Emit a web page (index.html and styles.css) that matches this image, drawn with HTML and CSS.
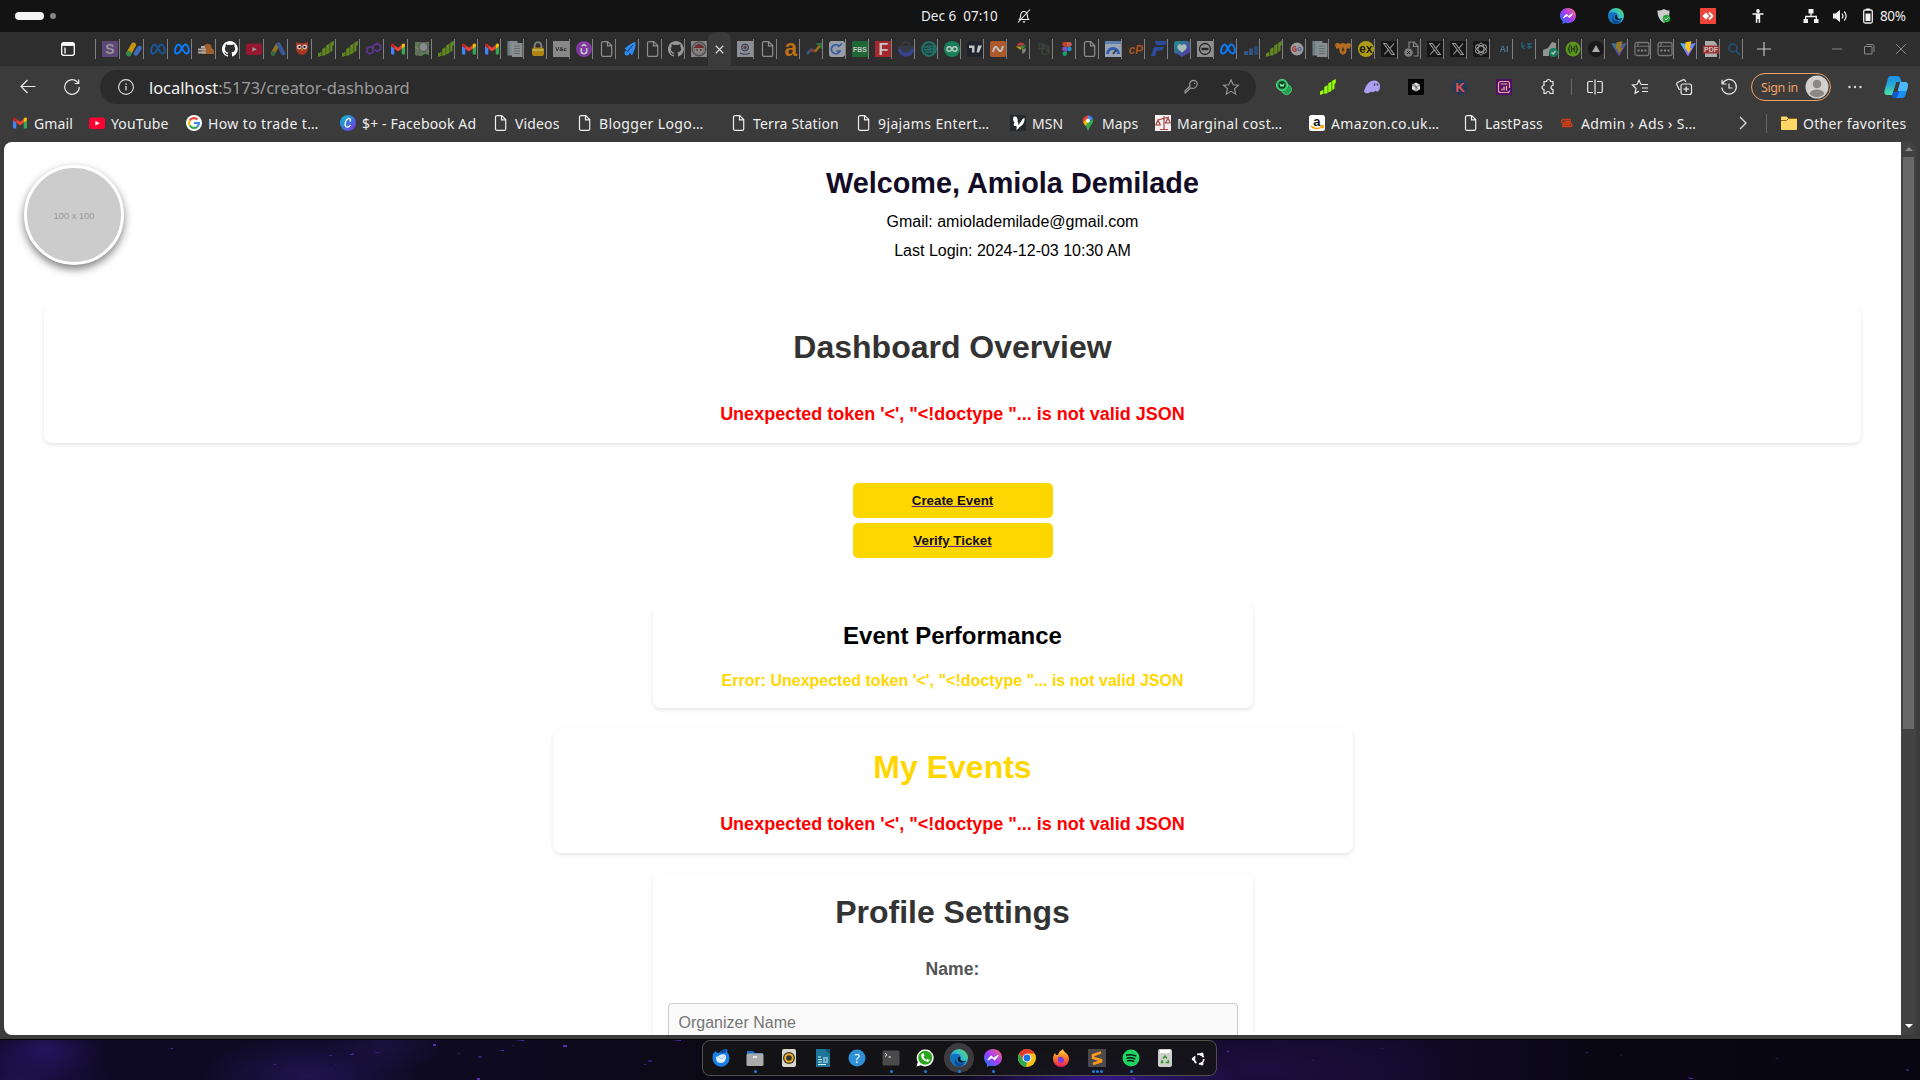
FILE: index.html
```html
<!DOCTYPE html>
<html lang="en">
<head>
<meta charset="utf-8">
<title>Creator Dashboard</title>
<link rel="stylesheet" href="styles.css">
</head>
<body>
<svg class="defs" aria-hidden="true">
<defs>
<linearGradient id="gm" x1="0" y1="1" x2="1" y2="0"><stop offset="0" stop-color="#0a7cff"/><stop offset=".5" stop-color="#a33bfa"/><stop offset="1" stop-color="#ff6968"/></linearGradient>
<linearGradient id="ge" x1="0" y1="1" x2="1" y2="0"><stop offset="0" stop-color="#0c59a4"/><stop offset=".5" stop-color="#2bb4e4"/><stop offset="1" stop-color="#5fe05a"/></linearGradient>
<linearGradient id="gc" x1="0" y1="0" x2="1" y2="1"><stop offset="0" stop-color="#00c4cc"/><stop offset="1" stop-color="#7d2ae8"/></linearGradient>
<linearGradient id="gv" x1="0" y1="0" x2="1" y2="1"><stop offset="0" stop-color="#41d1ff"/><stop offset="1" stop-color="#a033ff"/></linearGradient>
<linearGradient id="gp" x1="0" y1="0" x2="0" y2="1"><stop offset="0" stop-color="#1c8de8"/><stop offset=".45" stop-color="#26a9d8"/><stop offset="1" stop-color="#4fe0a0"/></linearGradient>
<linearGradient id="gh" x1="0" y1="0" x2="1" y2="1"><stop offset="0" stop-color="#19b7b0"/><stop offset="1" stop-color="#6a2fd0"/></linearGradient>
<linearGradient id="gf" x1="0" y1="0" x2="0" y2="1"><stop offset="0" stop-color="#ffd43c"/><stop offset=".5" stop-color="#ff7a22"/><stop offset="1" stop-color="#e8195e"/></linearGradient>
</defs>
<symbol id="page" viewBox="0 0 16 16"><path d="M3.500.6h5.200l4 4v9.300a1.400 1.400 0 0 1-1.400 1.400H3.900a1.400 1.400 0 0 1-1.400-1.400V2A1.400 1.400 0 0 1 3.900.6zM8.500.8v4h4" fill="none" stroke="currentColor" stroke-width="1.200"/></symbol>
<symbol id="gmail" viewBox="0 0 16 16"><path d="M1 4v8.500a1 1 0 0 0 1 1h2.300V7z" fill="#4285f4"/><path d="M15 4v8.500a1 1 0 0 1-1 1h-2.300V7z" fill="#34a853"/><path d="M4.300 3.900 8 6.700l3.700-2.800v3.800L8 10.500 4.300 7.700z" fill="#ea4335"/><path d="M1 4.200C1 2.500 2.700 2 4.300 3.400v4.300L1 5.300z" fill="#c5221f"/><path d="M15 4.200c0-1.700-1.700-2.200-3.300-.8v4.300L15 5.300z" fill="#fbbc04"/></symbol>
<symbol id="youtube" viewBox="0 0 16 16"><rect y="2.500" width="16" height="11.500" rx="2.500" fill="#ff0033"/><path d="m6.300 6 4.500 2.300-4.500 2.300z" fill="#fff"/></symbol>
<symbol id="bars" viewBox="0 0 16 16"><path d="M0 16v-3.500l3.500-1.800v4zM4.200 14.800V8l3.400-2v8.200zM8.200 13.500v-9l3.300-2V12zM12.200 11V1.700L15.800 0v4l-1.300 1v4.800z" fill="#97e312"/></symbol>
<symbol id="meta" viewBox="0 0 16 16"><path d="M1 10.800C1 7 2.600 3.500 4.700 3.500 7 3.500 9.300 12.500 12.300 12.500c1.500 0 2.500-1 2.500-2.800 0-3.300-1.600-6.200-3.500-6.200-2.700 0-4.800 9-7.800 9C2 12.500 1 12 1 10.800z" fill="none" stroke="#0a7cff" stroke-width="1.900"/></symbol>
<symbol id="github" viewBox="0 0 16 16"><path fill="#fff" d="M8 0C3.600 0 0 3.600 0 8c0 3.500 2.300 6.500 5.500 7.600.4.100.5-.2.500-.4v-1.400c-2.200.5-2.700-1-2.700-1-.4-.9-.9-1.200-.9-1.200-.7-.5.100-.5.100-.5.800.1 1.200.8 1.200.8.700 1.200 1.900.9 2.300.7.100-.5.300-.9.500-1.100-1.800-.2-3.600-.9-3.600-4 0-.9.300-1.600.8-2.100-.1-.2-.4-1 .1-2.100 0 0 .7-.2 2.200.8a7.500 7.500 0 0 1 4 0c1.500-1 2.200-.8 2.200-.8.400 1.100.2 1.900.1 2.100.5.600.8 1.300.8 2.100 0 3.100-1.900 3.700-3.700 3.900.3.300.6.800.6 1.500v2.200c0 .2.100.5.600.4A8 8 0 0 0 8 0z"/></symbol>
<symbol id="xcom" viewBox="0 0 16 16"><rect width="16" height="16" fill="#000"/><path d="M2.700 2.500h2.600l8 11h-2.600zM13 2.500 9 7.200M7.200 9.200l-4 4.300" fill="none" stroke="#fff" stroke-width="1.100"/></symbol>
<symbol id="docs" viewBox="0 0 16 16"><rect x=".5" width="10" height="14.500" fill="#cfe6ef"/><rect x="5" y="2" width="10.500" height="14" fill="#e8eef0"/><path d="M2 0v14M7 5h6M7 7.500h6M7 10h6M7 12.500h6" stroke="#8baebb" stroke-width="1"/></symbol>
<symbol id="vite" viewBox="0 0 16 16"><path d="M.2 2 8 15.800 15.800 2 8.500 3.300z" fill="url(#gv)"/><path d="M11.500.2 5.500 1.300 5 8l2-.4-.5 3 1.500-.4-.3 2.800 4-6-2 .3z" fill="#ffc61a"/></symbol>
<symbol id="window" viewBox="0 0 16 16"><rect x="1" y="1.500" width="14" height="13" rx="2" fill="none" stroke="#bbb" stroke-width="1.300"/><path d="M1 5.200h14M4 2v3" stroke="#bbb" stroke-width="1.100"/><path d="M3.500 9.500h2m1.500 0h2m1.500 0h2" stroke="#ddd" stroke-width="2"/></symbol>
<symbol id="messenger" viewBox="0 0 16 16"><path d="M8 0C3.500 0 0 3.200 0 7.600c0 2.300 1 4.300 2.600 5.700V16l2.600-1.200A9 9 0 0 0 8 15.200c4.500 0 8-3.200 8-7.600S12.500 0 8 0z" fill="url(#gm)"/><path d="m3.300 9.800 3-3.500 2.400 2 3.900-2.700-3 4-2.400-2z" fill="#fff" stroke="#fff"/></symbol>
<symbol id="edge" viewBox="0 0 16 16"><circle cx="8" cy="8" r="8" fill="url(#ge)"/><path d="M.1 8C.5 4.300 3.500 4 6 4.300c3 .4 4 2.200 3.400 4.200-.6 1.500 1 3 5.400 1.700A8 8 0 0 1 .1 8z" fill="#1272be"/><path d="M5.200 8.500c-.6 3.500 2.700 5.600 8.300 4A8 8 0 0 1 8 16c-4-.6-4.800-5-2.800-7.500z" fill="#0b4a92"/><path d="M8.600 6.700c1.400.8.400 1.900.6 2.700.4 1.600 3.300 1.700 5.200.9-2 2.600-8 2.300-7.400-1.500.1-1 .7-1.700 1.600-2.100z" fill="#131722"/></symbol>
<symbol id="openai" viewBox="0 0 16 16"><rect width="16" height="16" rx="1" fill="#000"/><g fill="none" stroke="#fff" stroke-width="1"><ellipse cx="8" cy="8" rx="2.900" ry="6"/><ellipse cx="8" cy="8" rx="2.900" ry="6" transform="rotate(60 8 8)"/><ellipse cx="8" cy="8" rx="2.900" ry="6" transform="rotate(120 8 8)"/></g></symbol>
</svg>

<div class="panel">
  <div class="workspaces"><i class="ws-on"></i><i class="ws-off"></i></div>
  <div class="clock"><span>Dec 6&nbsp; 07:10</span>
    <svg viewBox="0 0 16 16"><path d="M3.500 11.500c1-1 1-2.300 1.100-4C4.800 5 6 3.500 8 3.500s3.200 1.500 3.400 4c.1 1.700.1 3 1.100 4zM2 14.500 14 1.500" fill="none" stroke="#eee" stroke-width="1.100"/><path d="M6.300 13.300h3.400L8 15z" fill="#eee"/></svg></div>
  <div class="tray">
    <svg viewBox="0 0 16 16"><use href="#messenger"/></svg>
    <svg viewBox="0 0 16 16"><use href="#edge"/></svg>
    <svg viewBox="0 0 16 16"><path d="M8 1c2 1.300 3.800 1.500 5.500 1.500 0 5.500-.5 9.300-5.500 12.500C3 11.800 1.500 8 1.500 2.500 4 2.500 6 2.300 8 1z" fill="#ccc"/><circle cx="10.500" cy="10.500" r="3.800" fill="#21a83a"/><path d="m8.700 10.500 1.400 1.400 2.300-2.500" fill="none" stroke="#fff"/></svg>
    <svg viewBox="0 0 16 16"><rect width="16" height="16" fill="#ef443b"/><path d="M5.800 4.500 9.300 8l-3.500 3.500L2.300 8z" fill="#fff"/><path d="m9 4.500 3.500 3.500L9 11.500" fill="none" stroke="#fff" stroke-width="1.800"/></svg>
    <svg viewBox="0 0 16 16"><circle cx="8" cy="3" r="1.900" fill="#f2f2f2"/><path d="M2.500 6h11M8 6v5M6.600 6.500v8.300M9.400 6.500v8.300" stroke="#f2f2f2" stroke-width="1.600"/></svg>
    <svg viewBox="0 0 16 16"><path d="M5.500 1h5v4.500h-5zM.5 11H5v4H.5zM11 11h4.500v4H11z" fill="#f2f2f2"/><path d="M8 5v3.500M2.700 11V8.500h10.600V11" fill="none" stroke="#f2f2f2" stroke-width="1.300"/></svg>
    <svg viewBox="0 0 16 16"><path d="M1 5.500h2.500L8 2v12L3.500 10.500H1z" fill="#f2f2f2"/><path d="M10 5.500c1.200 1.500 1.200 3.500 0 5M12.300 3.500c2.200 2.700 2.200 6.300 0 9" fill="none" stroke="#f2f2f2" stroke-width="1.200"/></svg>
    <svg viewBox="0 0 16 16"><path d="M6 .5h4V2H6z" fill="#f2f2f2"/><rect x="3.700" y="2" width="8.600" height="13" rx="1.500" fill="none" stroke="#f2f2f2" stroke-width="1.300"/><path d="M5.500 5.500h5V13h-5z" fill="#f2f2f2"/></svg>
    <span>80%</span>
  </div>
</div>

<div class="tabstrip">
  <div class="tabmenu"><svg viewBox="0 0 16 16"><rect x="1.700" y="1.700" width="12.600" height="12.600" rx="2" fill="none" stroke="#fff" stroke-width="1.300"/><path d="M2 3.500h12" stroke="#fff" stroke-width="2.800"/><path d="M5 6.500v6" stroke="#fff" stroke-width="1.300"/></svg></div>
  <div class="tabs wide">
    <span class="tab dim"><svg viewBox="0 0 16 16"><rect width="16" height="16" rx="1" fill="#9360c4"/><text x="8" y="13" class="g w s14">S</text></svg></span>
    <span class="tab dim2"><svg viewBox="0 0 16 16"><path d="M3 12 7.500 4" stroke="#fbbc04" stroke-width="5" stroke-linecap="round"/><path d="m10 12.500 3.500-5.500" stroke="#4285f4" stroke-width="4.500" stroke-linecap="round"/><circle cx="2.800" cy="12.700" r="2.700" fill="#34a853"/></svg></span>
    <span class="tab dim"><svg><use href="#meta"/></svg></span>
    <span class="tab"><svg><use href="#meta"/></svg></span>
    <span class="tab dim2"><svg viewBox="0 0 16 16"><path d="M4 13c-1-7 3-11 7-10 2.500.6 2.500 3 3 4.500 2 .5 2.500 2.500 2 5.500z" fill="#c8712c"/><path d="M0 8.500h8M0 11.500h8M3 6h4" stroke="#ddd" stroke-width="2"/></svg></span>
    <span class="tab"><svg><use href="#github"/></svg></span>
    <span class="tab dim"><svg><use href="#youtube"/></svg></span>
    <span class="tab dim"><svg viewBox="0 0 16 16"><path d="m3 12 4.500-8" stroke="#fbbc04" stroke-width="4" stroke-linecap="round"/><path d="m8.500 3.500 4.800 8.700" stroke="#4285f4" stroke-width="4.300" stroke-linecap="round"/><circle cx="3" cy="12.500" r="2.400" fill="#34a853"/></svg></span>
    <span class="tab dim2"><svg viewBox="0 0 16 16"><path d="M2 1c4 1.500 8 1.500 12 0v6c0 4-3 7-6 7S2 11 2 7z" fill="#d23a1e"/><circle cx="5.200" cy="6" r="2.400" fill="#fff"/><circle cx="10.800" cy="6" r="2.400" fill="#fff"/><circle cx="5.500" cy="6" r="1.100"/><circle cx="10.500" cy="6" r="1.100"/><path d="m8 7 1.200 2.500H6.800z" fill="#fb0"/></svg></span>
    <span class="tab dim"><svg><use href="#bars"/></svg></span>
    <span class="tab dim"><svg><use href="#bars"/></svg></span>
    <span class="tab dim"><svg viewBox="0 0 16 16"><path d="m7 7.500-3-1.700L1 7.500v3.800L4 13l3-1.700V5L11 2.500l3.500 2v4L11 10.200 8.500 8.700" fill="none" stroke="#8a3df0" stroke-width="1.700"/></svg></span>
    <span class="tab"><svg><use href="#gmail"/></svg></span>
    <span class="tab dim"><svg viewBox="0 0 16 16"><path d="M1 1h14v13l-4-1-4 2-6-1z" fill="#8dc27d"/><path d="m1 6 5 3 3-4 6 6" stroke="#e9e1a3" fill="none"/><circle cx="9.500" cy="6" r="4.500" fill="#dfe5e6" stroke="#777"/><path d="m6 9.500-4 5" stroke="#999" stroke-width="2"/></svg></span>
  </div>
  <div class="tabs">
    <span class="tab dim"><svg><use href="#bars"/></svg></span>
    <span class="tab"><svg><use href="#gmail"/></svg></span>
    <span class="tab"><svg><use href="#gmail"/></svg></span>
    <span class="tab dim"><svg><use href="#docs"/></svg></span>
    <span class="tab dim2"><svg viewBox="0 0 16 16"><path d="M4.700 7V4.500a3.300 3.300 0 0 1 6.600 0V7" fill="none" stroke="#999" stroke-width="2"/><rect x="2" y="6.500" width="12" height="8.500" rx="2" fill="#e0a90c"/><path d="M2.500 9h11" stroke="#f8dc5a" stroke-width="2"/></svg></span>
    <span class="tab dim"><svg viewBox="0 0 16 16"><rect width="16" height="16" fill="#e3e4e8"/><text x="8" y="10" class="g b s5">V&amp;c</text></svg></span>
    <span class="tab dim2"><svg viewBox="0 0 16 16"><circle cx="8" cy="8" r="8" fill="#a03fc9"/><path d="M5.300 7v3a2.700 2.700 0 0 0 5.400 0V7M5.800 5 8 3.500 10.200 5" fill="none" stroke="#fff" stroke-width="1.600"/></svg></span>
    <span class="tab dim"><svg><use href="#page"/></svg></span>
    <span class="tab"><svg viewBox="0 0 16 16"><path d="M13.500 1C9 2 6 5 2.500 7.500L5 9.500 8 12l2 2.500C12 10 14 7 13.500 1z" fill="#2b8cf7"/><circle cx="5" cy="12" r="2.500" fill="#2b8cf7"/><path d="m11 4-6 7" stroke="#2e2e2e"/></svg></span>
    <span class="tab dim"><svg><use href="#page"/></svg></span>
    <span class="tab dim"><svg><use href="#github"/></svg></span>
    <span class="tab dim last"><svg viewBox="0 0 16 16"><rect width="16" height="16" fill="#ddd"/><circle cx="8" cy="8" r="7" fill="#bbb" stroke="#555"/><path d="M3 7c1-5 9-5 10 0z" fill="#a33"/><path d="M4 7h8v4l-4 2-4-2z" fill="#ecd6cb"/><path d="M5.500 9h1.500m2 0h1.500" stroke="#333" stroke-width="1.500"/></svg></span>
  </div>
  <div class="active"><svg viewBox="0 0 16 16"><path d="m4 4 8 8m0-8-8 8" stroke="#ddd" stroke-width="1.200"/></svg></div>
  <div class="tabs">
    <span class="tab dim"><svg viewBox="0 0 16 16"><rect width="16" height="16" fill="#eef"/><circle cx="8" cy="6.500" r="3.500" fill="#b8c4dc" stroke="#334a78"/><circle cx="8" cy="6.500" r="1.500" fill="#9c4040"/><path d="M3 12c3 1.500 7 1.500 10 0" stroke="#334a78" fill="none" stroke-width="1.200"/></svg></span>
    <span class="tab dim"><svg><use href="#page"/></svg></span>
    <span class="tab dim2"><svg viewBox="0 0 16 16"><text x="8" y="15" class="g big" fill="#f7880d">a</text></svg></span>
    <span class="tab dim"><svg viewBox="0 0 16 16"><path d="m1 13 4-4.500 4 1.500" fill="none" stroke="#4285f4" stroke-width="2.500"/><path d="m4 9 5 1.500" stroke="#ea4335" stroke-width="2.500"/><path d="m9 10.500 5-6" stroke="#fbbc04" stroke-width="2.500"/><path d="M10.500 3H15v4.500" fill="none" stroke="#34a853" stroke-width="2"/></svg></span>
    <span class="tab dim2"><svg viewBox="0 0 16 16"><rect width="16" height="16" rx="3" fill="#c3c8d3"/><path d="M10 5a4.500 4.500 0 1 0 1 5H7.500" fill="none" stroke="#3068d0" stroke-width="1.700"/><path d="m9 6 4-3.500" stroke="#3068d0" stroke-width="1.500"/></svg></span>
    <span class="tab dim2"><svg viewBox="0 0 16 16"><rect width="16" height="16" rx="1" fill="#1a7d3b"/><text x="8" y="11" class="g w s7">FBS</text></svg></span>
    <span class="tab dim2"><svg viewBox="0 0 16 16"><rect width="16" height="16" fill="#d5262e"/><text x="8.500" y="13.700" class="g w s16">F</text></svg></span>
    <span class="tab dim"><svg viewBox="0 0 16 16"><path d="M4 5c0-5 8-5 8 0" fill="none" stroke="#445" stroke-width="2"/><path d="M0 5h16v3h-3a5 5 0 0 1-10 0H0z" fill="#3b4560"/><path d="M0 8h3c1 5 9 5 10 0h3c0 10-16 10-16 0z" fill="#4359f0"/></svg></span>
    <span class="tab dim"><svg viewBox="0 0 16 16"><circle cx="8" cy="8" r="7" fill="#185e63" stroke="#16c6a8" stroke-width="1.500"/><path d="M2 6h6M3 8.500h5M4 11h4m1-6h4v6H9zM9 8h4" stroke="#16d6b8" fill="none"/></svg></span>
    <span class="tab dim2"><svg viewBox="0 0 16 16"><circle cx="8" cy="8" r="8" fill="#0fa16e"/><g fill="none" stroke="#fff" stroke-width="1.400"><circle cx="5.200" cy="8" r="2.300"/><circle cx="10.800" cy="8" r="2.300"/></g></svg></span>
    <span class="tab dim2"><svg viewBox="0 0 16 16"><rect width="16" height="16" rx="3" fill="#1b1f2e"/><path d="M2 4.500h5.500v7H5v-4.500H2zM11 4.500h4l-3 7H9.500z" fill="#fff"/></svg></span>
    <span class="tab dim2"><svg viewBox="0 0 16 16"><rect width="16" height="16" rx="2" fill="#e06a2c"/><path d="M3 11c1-5 3-7 5-3s4 2 5-3" fill="none" stroke="#fff" stroke-width="1.900"/></svg></span>
    <span class="tab dim2"><svg viewBox="0 0 16 16"><path d="M4 5c0-4 6-5 8-1z" fill="#ea4335"/><path d="M2.500 5.500H9L8 9z" fill="#fbbc04"/><path d="M8 4.500h5.500L9 9z" fill="#34a853"/><path d="m9 9 3.500-2c1 3-1 5-3 6z" fill="#aaa"/></svg></span>
    <span class="tab faint"><svg viewBox="0 0 16 16"><path d="M3 3h3a2 2 0 0 1 0 5H3zM6 8h5a2 2 0 0 1 0 5H6V5h4a2 2 0 0 1 0 5" fill="none" stroke="#668068" stroke-width="1.200"/></svg></span>
    <span class="tab dim2"><svg viewBox="0 0 16 16"><path d="M8 1H5.500a2.300 2.300 0 0 0 0 4.700H8z" fill="#f24e1e"/><path d="M8 1h2.500a2.300 2.300 0 0 1 0 4.700H8z" fill="#ff7262"/><path d="M8 5.700H5.500a2.300 2.300 0 0 0 0 4.700H8z" fill="#a259ff"/><circle cx="10.400" cy="8" r="2.300" fill="#1abcfe"/><path d="M8 10.400H5.500A2.300 2.300 0 1 0 8 12.700z" fill="#0acf83"/></svg></span>
    <span class="tab dim"><svg><use href="#page"/></svg></span>
    <span class="tab dim2"><svg viewBox="0 0 16 16"><path d="M0 0h16v16H0z" fill="#6f9fdc"/><path d="M0 3h16v13H0z" fill="#c4d2e8"/><path d="M2.500 13a5.500 5.500 0 0 1 11 0" fill="none" stroke="#2f6fe0" stroke-width="3"/><path d="m8 13 3-4" stroke="#333" stroke-width="1.500"/></svg></span>
    <span class="tab dim2"><svg viewBox="0 0 16 16"><text x="8" y="12.500" class="g it" fill="#e0601c">cP</text></svg></span>
    <span class="tab dim2"><svg viewBox="0 0 16 16"><path d="M4 0h12l-2 4H5zM3 6h10l-2 3.500H6L4 15H0z" fill="#2f56c8"/></svg></span>
    <span class="tab dim2"><svg viewBox="0 0 16 16"><path d="M3 0h10a3 3 0 0 1 3 3v7a3 3 0 0 1-3 3l-5 3-5-3a3 3 0 0 1-3-3V3a3 3 0 0 1 3-3z" fill="url(#gh)"/><path d="M8 11.500C4 8.500 3 7 3.500 5 4 3 7 2.500 8 4.700 9 2.500 12 3 12.500 5 13 7 12 8.500 8 11.500z" fill="#d7f3f1"/></svg></span>
    <span class="tab dim"><svg viewBox="0 0 16 16"><rect width="16" height="16" fill="#eee"/><circle cx="8" cy="8" r="5.500" fill="none" stroke="#222" stroke-width="1.300"/><path d="M4.500 8h7" stroke="#222" stroke-width="2.500"/></svg></span>
    <span class="tab"><svg><use href="#meta"/></svg></span>
    <span class="tab dim"><svg viewBox="0 0 16 16"><path d="M1 10h4v4H1zM6 7.500h4V14H6z" fill="#3b7ccb"/><path d="M11 5h4v9h-4z" fill="#2764b0"/></svg></span>
    <span class="tab dim"><svg><use href="#bars"/></svg></span>
    <span class="tab dim2"><svg viewBox="0 0 16 16"><circle cx="8" cy="8" r="6.500" fill="#c8c8c8"/><path d="M7 6a2.300 2.300 0 1 0 0 4V8H5.500" fill="none" stroke="#d33" stroke-width="1.300"/><circle cx="10.500" cy="8" r="1.700" fill="none" stroke="#36c"/></svg></span>
    <span class="tab dim"><svg><use href="#docs"/></svg></span>
    <span class="tab dim2"><svg viewBox="0 0 16 16"><path d="M0 4c1-3 4-2 5-1 2-1.500 4-1.500 6 0 1-1 4-2 5 1l-1.500 4-2.500-1-1 5-3 2-3-2-1-5-2.500 1z" fill="#e8861b"/><path d="m8 6 1.500 3L8 11 6.500 9z" fill="#5a3a12"/></svg></span>
    <span class="tab dim2"><svg viewBox="0 0 16 16"><circle cx="8" cy="8" r="8" fill="#e0c60d"/><text x="8" y="11.500" class="g b s12">ex</text></svg></span>
    <span class="tab dim"><svg><use href="#xcom"/></svg></span>
    <span class="tab dim"><svg viewBox="0 0 16 16"><path d="M5 7V1h5l4 4v10H9.500M9.500 1v4.500H14" fill="none" stroke="#ddd" stroke-width="1.200"/><circle cx="4.500" cy="11.500" r="4.300" fill="#ccc"/><path d="m3 10 3 3m0-3-3 3" stroke="#222"/></svg></span>
    <span class="tab dim"><svg><use href="#xcom"/></svg></span>
    <span class="tab dim"><svg><use href="#xcom"/></svg></span>
    <span class="tab dim"><svg><use href="#openai"/></svg></span>
    <span class="tab dim"><svg viewBox="0 0 16 16"><text x="8" y="11" class="g s9" fill="#6bb9f8">AI</text></svg></span>
    <span class="tab dim"><svg viewBox="0 0 16 16"><path d="M3 1v5l3-2M3 6l3 2M8 3h5M8 6h5M10 2v6" fill="none" stroke="#1593b8" stroke-width="1.400"/></svg></span>
    <span class="tab dim2"><svg viewBox="0 0 16 16"><path d="M1 15V9l5-2 4-6 4 1v6L7 10v5z" fill="#bbb"/><circle cx="11.500" cy="11.500" r="4.500" fill="#0d9e6c"/><path d="m9.500 11.500 1.500 1.500 2.500-3" fill="none" stroke="#fff" stroke-width="1.300"/></svg></span>
    <span class="tab dim2"><svg viewBox="0 0 16 16"><circle cx="8" cy="8" r="7.500" fill="#6dbb1c"/><path d="M5.500 4C4 4 5 7.500 3 8c2 .5 1 4 2.500 4M10.500 4C12 4 11 7.500 13 8c-2 .5-1 4-2.500 4M6.500 5v6M9.500 5v6M6.500 8h3" fill="none" stroke="#23470b" stroke-width="1.300"/></svg></span>
    <span class="tab dim2"><svg viewBox="0 0 16 16"><circle cx="8" cy="8" r="8" fill="#111"/><path d="m8 4 4 7H4z" fill="#ddd"/></svg></span>
    <span class="tab dim"><svg><use href="#vite"/></svg></span>
    <span class="tab dim"><svg><use href="#window"/></svg></span>
    <span class="tab dim"><svg><use href="#window"/></svg></span>
    <span class="tab"><svg><use href="#vite"/></svg></span>
    <span class="tab dim2"><svg viewBox="0 0 16 16"><path d="M2 0h9l3 3v13H2z" fill="#ddd"/><path d="M0 4.500h16v8H0z" fill="#c8342f"/><text x="8" y="11" class="g w s7">PDF</text></svg></span>
    <span class="tab dim"><svg viewBox="0 0 16 16"><circle cx="7" cy="7" r="4" fill="none" stroke="#1478d0" stroke-width="1.500"/><path d="m10 10 4 4" stroke="#1478d0" stroke-width="1.700"/></svg></span>
  </div>
  <svg class="plus" viewBox="0 0 16 16"><path d="M8 1v14M1 8h14" stroke="#ccc" stroke-width="1.100"/></svg>
  <div class="winctl">
    <svg viewBox="0 0 16 16"><path d="M3 8h10" stroke="#888"/></svg>
    <svg viewBox="0 0 16 16"><path d="M5.500 3.500h6a1.500 1.500 0 0 1 1.500 1.500v6M3.500 5.500h7.500v7.500H3.500z" fill="none" stroke="#888"/></svg>
    <svg viewBox="0 0 16 16"><path d="m3 3 10 10m0-10L3 13" stroke="#888"/></svg>
  </div>
</div>

<div class="toolbar">
  <svg class="nav" viewBox="0 0 16 16"><path d="M15.500 7.500H1M7.500 1 1 7.500 7.500 14" fill="none" stroke="#e8e8e8" stroke-width="1.200"/></svg>
  <svg class="nav" viewBox="0 0 16 16"><path d="M15.300 8A7.300 7.300 0 1 1 13 2.700l1.500 1.600M14.700.5v4h-4" fill="none" stroke="#e8e8e8" stroke-width="1.200"/></svg>
  <div class="url">
    <svg viewBox="0 0 16 16"><circle cx="8" cy="8" r="7.400" fill="none" stroke="#ddd" stroke-width="1.100"/><path d="M8 7v4.500M8 4.200v1.500" stroke="#ddd" stroke-width="1.300"/></svg>
    <span class="addr"><b>localhost</b>:5173/creator-dashboard</span>
    <svg viewBox="0 0 16 16" class="key"><path d="M7.500 9 2.500 14H2v-2l5-5c-1-3 .5-5.500 3.500-5.700 2.500 0 4 2 3.700 4C14 8 11 10.300 7.500 9zM11 4.500h1" fill="none" stroke="#999" stroke-width="1.200"/></svg>
    <svg viewBox="0 0 16 16"><path d="m8 .8 2.200 4.900 5.300.5-4 3.500 1.200 5.400L8 12.300l-4.700 2.800 1.200-5.400-4-3.500 5.300-.5z" fill="none" stroke="#999" stroke-width="1.100"/></svg>
  </div>
  <div class="ext">
    <i><svg viewBox="0 0 16 16"><circle cx="10.500" cy="10.500" r="5" fill="#2a9c57" stroke="#38d273"/><circle cx="6" cy="6" r="5.500" fill="#2fae62" stroke="#4fe88b"/><circle cx="6" cy="6" r="3.700" fill="#123d22"/><path d="m4 4.500 1 3 1-2 1 2 1-3" stroke="#8affb4" fill="none"/></svg></i>
    <i><svg class="bright"><use href="#bars"/></svg></i>
    <i><svg viewBox="0 0 16 16"><path d="M0 13C1 7 5 1.500 10 1.500c4 0 6 2.500 6 5.500s-1 6-3 5.500c-1 0-1-1.500-2-.5-1 1.500-3 1.500-4 .5-2 2-5 2.500-7 .5z" fill="#ab9ff2"/><path d="M10.500 4.500v2M13.500 4.500v2" stroke="#3b3b3b" stroke-width="1.400"/></svg></i>
    <i><svg viewBox="0 0 16 16"><rect width="16" height="16"/><path d="m8 3.500 4 2.200v4.600l-4 2.200-4-2.200V5.700z" fill="#ddd"/><path d="m4 6 4 2 4-2M8 8v4M6 5l4 5" stroke="#555" stroke-width=".8" fill="none"/></svg></i>
    <i><svg viewBox="0 0 16 16"><circle cx="8" cy="8" r="7.800" fill="#253b55"/><text x="8" y="12.500" class="g" fill="#e0524f">K</text></svg></i>
    <i><svg viewBox="0 0 16 16"><rect width="16" height="16" rx="1" fill="#4d1166"/><path d="M13.500 9V4.500a2 2 0 0 0-2-2h-7a2 2 0 0 0-2 2v7a2 2 0 0 0 2 2h7a2 2 0 0 0 2-2M4.500 5h7" fill="none" stroke="#f3a29e" stroke-width="1.200"/><path d="M6 11.500V9.500m2 2v-4M10.500 11.500V7" stroke="#f6c1a0" stroke-width="1.200"/></svg></i>
    <i><svg viewBox="0 0 16 16"><path d="M4 2.500h2.500a2 2 0 0 1 4 0H13v4a2 2 0 1 0 0 4v4h-3a2 2 0 0 0-4 0H4v-4a2 2 0 1 1 0-4z" fill="none" stroke="#e8e8e8" stroke-width="1.200"/></svg></i>
  </div>
  <div class="tools">
    <i><svg viewBox="0 0 16 16"><path d="M6 2.500H2a1.300 1.300 0 0 0-1.300 1.300v8.400A1.300 1.300 0 0 0 2 13.500h4M10 2.500h4a1.300 1.300 0 0 1 1.300 1.300v8.400a1.300 1.300 0 0 1-1.300 1.300h-4M8 .5v15" fill="none" stroke="#e8e8e8" stroke-width="1.200"/></svg></i>
    <i><svg viewBox="0 0 16 16"><path d="M9 5.500h7M10 9h6M10 12.500h6M9 5.500l-2-4.300-2 4.300-4.500.5L4 9.500 3 14.300l4-2.200" fill="none" stroke="#e8e8e8" stroke-width="1.200"/></svg></i>
    <i><svg viewBox="0 0 16 16"><rect x="5" y="5" width="10.500" height="10.500" rx="2" fill="none" stroke="#e8e8e8" stroke-width="1.200"/><path d="M3.500 11 .8 5.500a1.500 1.500 0 0 1 .7-2L7 .9a1.500 1.500 0 0 1 2 .6l.8 1.600M10.200 7.500v5.500M7.500 10.200H13" fill="none" stroke="#e8e8e8" stroke-width="1.200"/></svg></i>
    <i><svg viewBox="0 0 16 16"><path d="M1.300 5A7.300 7.300 0 1 1 .8 8.500M1 .8V5h4.500M8 4.500V9h3.500" fill="none" stroke="#e8e8e8" stroke-width="1.200"/></svg></i>
  </div>
  <div class="signin"><span>Sign in</span><svg viewBox="0 0 24 24"><circle cx="12" cy="12" r="11.500" fill="#d2d0ce"/><circle cx="12" cy="9" r="4.300" fill="#8a8886"/><path d="M4.500 18.500c2-5.500 13-5.500 15 0-4 5-11 5-15 0z" fill="#8a8886"/></svg></div>
  <svg class="dots" viewBox="0 0 16 16"><circle cx="2.500" cy="8" r="1.200"/><circle cx="8" cy="8" r="1.200"/><circle cx="13.500" cy="8" r="1.200"/></svg>
  <svg class="copilot" viewBox="0 0 24 24"><path d="M6 1h7c2 0 3 1 3.500 3l1 3h-5L9 18c-.5 1.500-1 2-2 2H3c-3 0-3-3-2-6l2.500-9C4 2.500 5 1 6 1z" fill="url(#gp)"/><path d="M18 23h-7c-2 0-2.500-1-3-3h3c1 0 2-1 2.500-3L16 7h5c3 0 3.500 2.500 2.500 6l-2 7c-.5 2-1.500 3-3.500 3z" fill="#1c8df2"/><path d="M9 18c-.5 1.500-1 2-2 2 1 2 2 3 4 3 1.500 0 2.500-1 3-3l1-4h-5.400z" fill="#1357c9"/><path d="M16 7h5c3 0 3.500 2.500 2.500 6l-1 3h-9z" fill="#4bb9fb"/><path d="M12.500 7H16l-3 10h-3.700z" fill="#3b3b3b"/></svg>
</div>

<div class="bookmarks">
  <div class="bm"><svg><use href="#gmail"/></svg>Gmail</div>
  <div class="bm"><svg><use href="#youtube"/></svg>YouTube</div>
  <div class="bm trunc"><svg viewBox="0 0 16 16"><circle cx="8" cy="8" r="8" fill="#fff"/><g fill="none" stroke-width="2.200"><path d="M11.500 4.500A4.900 4.900 0 0 0 3.800 5.500" stroke="#ea4335"/><path d="M3.800 5.500a4.900 4.900 0 0 0 0 5" stroke="#fbbc04"/><path d="M3.800 10.500a4.900 4.900 0 0 0 7.500 1.200" stroke="#34a853"/><path d="M11.300 11.700A4.900 4.900 0 0 0 12.900 8H8" stroke="#4285f4"/></g></svg>How to trade t…</div>
  <div class="bm"><svg viewBox="0 0 16 16"><circle cx="8" cy="8" r="8" fill="url(#gc)"/><path d="M10 6.500c1.500-2-.5-4-2.500-2.500S4.500 9 5.500 11s4 1 5-1" fill="none" stroke="#fff" stroke-width="1.300"/></svg>$+ - Facebook Ad</div>
  <div class="bm"><svg><use href="#page"/></svg>Videos</div>
  <div class="bm trunc"><svg><use href="#page"/></svg>Blogger Logo…</div>
  <div class="bm"><svg><use href="#page"/></svg>Terra Station</div>
  <div class="bm trunc"><svg><use href="#page"/></svg>9jajams Entert…</div>
  <div class="bm"><svg viewBox="0 0 16 16"><rect width="16" height="16" fill="#26292d"/><path d="M4 1.500c3-.5 4 2 3.500 5 1 1 1 2 .8 3.500C11 8 11 4 14.500 3c.5 4-2 8-5 9-1 2-2 2.500-3.500 2.500 1-1.500 1-2.500 0-3.500-3 .5-2.500-2-1.500-3.500C3 6 2.500 3 4 1.500z" fill="#fff"/></svg>MSN</div>
  <div class="bm"><svg viewBox="0 0 16 16"><path d="M8 .5a5.300 5.300 0 0 0-4 1.800L8 6z" fill="#ea4335"/><path d="M8 .5a5.300 5.300 0 0 1 5 3.700L8 6z" fill="#4285f4"/><path d="M4 2.300A5.300 5.300 0 0 0 4 9l4-4z" fill="#ea4335"/><path d="M4 9 13 4.200C14 9 9.500 10 8.500 15.500H7.500C7 12 5.500 11 4 9z" fill="#34a853"/><path d="m3.300 7.500 3-3 2 3-3 3.300z" fill="#fbbc04"/><circle cx="8" cy="5.500" r="1.900" fill="#fff"/></svg>Maps</div>
  <div class="bm trunc"><svg viewBox="0 0 16 16"><rect width="16" height="16" fill="#f4eeee"/><path d="M9 1v13M5 14.500h8M3 5l11-3M3 5 .8 10h4.400zM13 3l-2.500 5h4.700z" fill="none" stroke="#a74343" stroke-width="1.200"/></svg>Marginal cost…</div>
  <div class="bm trunc"><svg viewBox="0 0 16 16"><rect width="16" height="16" rx="2.500" fill="#fff"/><text x="8" y="10.500" class="g b">a</text><path d="M2 11c3 3 8 3.300 11.500.8m-2-.8h3l-1 2.500" fill="none" stroke="#f90" stroke-width="1.400"/></svg>Amazon.co.uk…</div>
  <div class="bm"><svg><use href="#page"/></svg>LastPass</div>
  <div class="bm trunc"><svg viewBox="0 0 16 16"><path d="M12 4.500H4.500C2 4.500 2 8 4.500 8h6.500c2.500 0 2.500 3.500 0 3.500H3M12 6.500H5.500M3 9.800h8" fill="none" stroke="#d23c14" stroke-width="1.500"/></svg>Admin › Ads › S…</div>
  <svg class="more" viewBox="0 0 16 16"><path d="m5 2 6 6-6 6" fill="none" stroke="#ddd" stroke-width="1.300"/></svg>
  <div class="bm other"><svg viewBox="0 0 16 16"><path d="M0 2.500A1 1 0 0 1 1 1.500h4.500L7.500 3.500H15a1 1 0 0 1 1 1V14a1 1 0 0 1-1 1H1a1 1 0 0 1-1-1z" fill="#ffd766"/><path d="M0 5.500h5.500l2-2H15V3" fill="none" stroke="#8a6914"/></svg>Other favorites</div>
</div>

<div class="frame">
  <main class="page">
    <header class="head">
      <div class="avatar">100 x 100</div>
      <div class="who">
        <h1>Welcome, Amiola Demilade</h1>
        <p>Gmail: amiolademilade@gmail.com</p>
        <p>Last Login: 2024-12-03 10:30 AM</p>
      </div>
    </header>
    <section class="card overview">
      <h2>Dashboard Overview</h2>
      <p class="error">Unexpected token '&lt;', "&lt;!doctype "... is not valid JSON</p>
    </section>
    <div class="actions">
      <a class="btn"><span>Create Event</span></a>
      <a class="btn"><span>Verify Ticket</span></a>
    </div>
    <section class="card perf">
      <h3>Event Performance</h3>
      <p class="warn">Error: Unexpected token '&lt;', "&lt;!doctype "... is not valid JSON</p>
    </section>
    <section class="card events">
      <h2>My Events</h2>
      <p class="error">Unexpected token '&lt;', "&lt;!doctype "... is not valid JSON</p>
    </section>
    <section class="card profile">
      <h2>Profile Settings</h2>
      <label>Name:</label>
      <input type="text" placeholder="Organizer Name">
    </section>
  </main>
  <div class="scroll"><i class="up"></i><i class="thumb"></i><i class="down"></i></div>
</div>

<div class="desktop">
  <svg class="stars" viewBox="0 0 1920 40"><g fill="#5a2bb0"><path d="m169 9 4-1v1zM349 15l5-2-1 2zM328 16l4-1v1zM273 24h3v1zM433 4h3v2h-3zM498 11l6-1v1zM495 31l3-2zM477 38h3v2h-3zM515 1l9-1v1zM563 5h4v2h-4zM643 24h3v1zM672 1l9-1v1zM1226 11h3v2zM1130 37l6 1-2 2zM1585 12h3v1zM1687 37l8 2h-5z"/></g><g fill="#2c1d6e"><path d="M375 12h5v1h-5zM334 24h2v1zM456 13h4v1zM478 16h4v2h-4zM512 5h2v2zM648 20h4v2h-4zM1310 20h4v1zM1380 8h3v1zM1620 15h2v1zM1774 18h4v1zM1906 29h3v2h-3z"/></g></svg>
  <div class="dock">
    <i><svg viewBox="0 0 18 18"><path d="M1 5 .5 9a8.500 8.500 0 0 0 17 .5C17.500 6 16 4 15 3c.3-1 .8-2 .2-2.700C12 .5 9 1 7 4 5 4 4 3 3.500 2 2.500 3 2 4 1 5z" fill="#1a7fe6"/><path d="M7 4c2-3 5-3.500 8.200-3.700L13 4z" fill="#0d4da8"/><path d="M4 8c3-1 6-4 10-2 .5 4-1 8-5 8S4 11 4 8z" fill="#e4f0ff"/><path d="m5 7 4.500 3L14 6" fill="none" stroke="#8abef5"/></svg></i>
    <i class="run"><svg viewBox="0 0 18 18"><path d="M1 2h6l2 2h8v5H1z" fill="#1c6fc7"/><rect x=".5" y="4.500" width="17" height="12.500" rx="1.500" fill="#ababab"/><path d="M7 8h4" stroke="#fff" stroke-width="1.400"/></svg></i>
    <i><svg viewBox="0 0 18 18"><rect x="2" width="14" height="18" rx="2" fill="#dcd7cd"/><circle cx="9" cy="9" r="6" fill="#323232"/><circle cx="9" cy="9" r="3.800" fill="none" stroke="#e9ad1b" stroke-width="2"/></svg></i>
    <i><svg viewBox="0 0 18 18"><path d="M2 0h9l5 5v13H2z" fill="#1d7699"/><path d="M11 0h5v5z" fill="#155a78"/><path d="M4 8h3M4 10.500h4M4 13h4M4 15.500h8M9 9h5M9 13h5M9 11h2m1 0h2" stroke="#d6f1fb" stroke-width="1.200"/></svg></i>
    <i><svg viewBox="0 0 18 18"><circle cx="9" cy="9" r="8.500" fill="#2f90d8"/><text x="9" y="13.500" class="help">?</text></svg></i>
    <i class="run"><svg viewBox="0 0 18 18"><rect x=".5" y="1.500" width="17" height="15" rx="1.500" fill="#4a4a4a"/><path d="m3 4 2 1.800L3 7.500M6.500 8H9" fill="none" stroke="#eee"/></svg></i>
    <i class="run"><svg viewBox="0 0 18 18"><path d="m.5 17.500 1.300-4.400A8.500 8.500 0 1 1 5 16.300z" fill="#fff"/><circle cx="9.200" cy="8.800" r="7" fill="#2aa71b"/><path d="M6 4.500c-2 2 0 6 3 7.500s4.500.5 4.500-1l-2-1.200-1.200 1C9 10 8 9 7.500 7.500l1-1L7.500 4.300z" fill="#fff"/></svg></i>
    <i class="run on"><svg viewBox="0 0 16 16"><use href="#edge"/></svg></i>
    <i class="run"><svg viewBox="0 0 16 16"><use href="#messenger"/></svg></i>
    <i><svg viewBox="0 0 18 18"><circle cx="9" cy="9" r="9" fill="#fbc116"/><path d="M1.200 4.500A9 9 0 0 1 16.800 4.500H9L5 11z" fill="#e33b2e"/><path d="M1.200 4.500 5.100 11.300 9 13.500 8 18A9 9 0 0 1 1.200 4.500z" fill="#2da94f"/><circle cx="9" cy="9" r="4.300" fill="#fff"/><circle cx="9" cy="9" r="3.400" fill="#1a73e8"/></svg></i>
    <i><svg viewBox="0 0 18 18"><path d="M11 0c0 3 6 4 6 10a8 8 0 0 1-16 0c0-2 .5-4 2-6l1 2h2c1-4 3-4 5-6z" fill="url(#gf)"/><path d="M6 8c3-1 6 0 6 3a3 3 0 0 1-6 0z" fill="#7a3bdc"/></svg></i>
    <b></b>
    <i class="run3"><svg viewBox="0 0 18 18"><rect width="18" height="18" rx="1" fill="#4a4a4a"/><path d="m13 3.500-8 2.700v2.600l8 2.500v1L5 15" fill="none" stroke="#ff9a1c" stroke-width="2.600"/></svg></i>
    <i class="run"><svg viewBox="0 0 18 18"><circle cx="9" cy="9" r="8.500" fill="#1ed760"/><path d="M4 6.300c4-1.200 7-.8 10.300.9M4.500 9.300c3.500-1 6-.6 8.800.8M5 12c3-.8 5-.5 7.300.7" fill="none" stroke="#121212" stroke-width="1.500"/></svg></i>
    <i><svg viewBox="0 0 18 18"><rect x="2" width="14" height="18" rx="2" fill="#cfcfcb"/><path d="M4 2.500h10" stroke="#fff" stroke-width="3"/><path d="m7 9.500 2-2.500 2 2.500M12 11l.5 2.500H9.500M7.500 13.500H5.500L6.500 11" fill="none" stroke="#3c9a33" stroke-width="1.500"/></svg></i>
    <i><svg viewBox="0 0 18 18"><circle cx="9" cy="10" r="4.800" fill="none" stroke="#fff" stroke-width="1.700" stroke-dasharray="7.500 2.550"/><g fill="#fff"><circle cx="3.500" cy="10" r="1.700"/><circle cx="11.800" cy="5.200" r="1.700"/><circle cx="11.800" cy="14.800" r="1.700"/></g></svg></i>
  </div>
</div>
</body>
</html>
```

FILE: styles.css
```css
* { box-sizing: border-box; }
html, body { margin: 0; height: 1080px; overflow: hidden; }
body {
  display: flex; flex-direction: column;
  background: #3b3b3b; color: #eee;
  font-family: "Noto Sans", "Open Sans", sans-serif;
}
svg { display: block; flex: none; width: 16px; height: 16px; overflow: visible; }
i { font-style: normal; }
.defs { position: absolute; width: 0; height: 0; overflow: hidden; }

/* letters inside small icons */
.g { font: bold 13px "Liberation Sans", sans-serif; text-anchor: middle; }
.w { fill: #fff; }
.b { fill: #111; }
.s5 { font-size: 6px; }
.s7 { font-size: 7px; }
.s9 { font-size: 9px; }
.s12 { font-size: 12px; }
.s14 { font-size: 14px; }
.s16 { font-size: 16px; }
.big { font-size: 23px; }
.it { font-style: italic; font-size: 12px; }

/* system panel */
.panel {
  flex: none; height: 32px; background: #131313;
  display: grid; grid-template-columns: 921px 1fr auto; align-items: center;
  font-size: 13.5px;
}
.workspaces { display: flex; align-items: center; gap: 6px; padding-left: 15px; }
.ws-on { width: 29px; height: 8px; border-radius: 4px; background: #f4f4f4; }
.ws-off { width: 6px; height: 6px; border-radius: 50%; background: #858585; }
.clock { display: flex; align-items: center; letter-spacing: 0; }
.clock span { width: 95px; white-space: nowrap; }
.tray { display: flex; align-items: center; padding-right: 11px; }
.tray svg { margin-right: 32px; }
.tray svg:nth-child(3) { margin-right: 28px; }
.tray svg:nth-child(4) { margin-right: 34px; }
.tray svg:nth-child(5) { margin-right: 37px; }
.tray svg:nth-child(6) { margin-right: 13px; }
.tray svg:nth-child(7) { margin-right: 12px; }
.tray svg:nth-child(8) { margin-right: 4px; }
.tray span { width: 29px; letter-spacing: -0.4px; }

/* tab strip */
.tabstrip { flex: none; height: 34px; background: #2e2e2e; display: flex; align-items: center; }
.tabmenu { width: 96px; height: 20px; padding: 2px 0 0 60px; border-right: 1px solid #808080; }
.tabs { display: flex; }
.tab { width: 23px; height: 20px; padding: 2px 0 0 6px; border-right: 1px solid #808080; color: #eee; }
.wide .tab { width: 24px; }
.tab.last { border-right-color: transparent; }
.dim svg { opacity: .5; }
.dim2 svg { opacity: .72; }
.faint svg { opacity: .3; }
.active {
  width: 23px; height: 34px; background: #3b3b3b; border-radius: 8px 8px 0 0;
  display: flex; align-items: center; justify-content: center;
}
.active svg { width: 15px; height: 15px; }
.plus { margin-left: 13px; }
.winctl { display: flex; gap: 16px; margin-left: auto; padding-right: 11px; }

/* toolbar */
.toolbar { flex: none; height: 38px; padding-top: 4px; display: flex; align-items: center; }
.nav { margin-left: 20px; }
.nav + .nav { margin-left: 28px; }
.url {
  width: 1156px; height: 34px; margin-left: 20px; padding: 0 17px 0 18px;
  border-radius: 17px; background: #2b2b2b;
  display: flex; align-items: center;
}
.addr { flex: 1; margin-left: 15px; font-size: 16.5px; color: #9a9a9a; letter-spacing: -0.06px; white-space: nowrap; }
.addr b { font-weight: 400; color: #f2f2f2; }
.key { margin-right: 24px; }
.ext, .tools { display: flex; }
.ext { margin-left: 6px; padding-right: 1px; }
.ext i { width: 44px; display: grid; place-items: center; }
.bright { filter: saturate(1.4) brightness(1.1); }
.tools { border-left: 1px solid #6a6a6a; padding-left: 1px; }
.tools i { width: 44.5px; display: grid; place-items: center; }
.signin {
  width: 80px; height: 28px; padding-left: 9px;
  border: 1px solid #f0a166; border-radius: 14px; color: #f0a166;
  display: flex; align-items: center; font-size: 12.5px; letter-spacing: -0.4px;
}
.signin span { width: 44px; white-space: nowrap; }
.signin svg { width: 24px; height: 24px; }
.dots { margin-left: 16px; fill: #ddd; }
.copilot { width: 26px; height: 24px; margin-left: 20px; }

/* bookmarks bar */
.bookmarks { flex: none; height: 38px; padding-left: 12px; display: flex; align-items: center; font-size: 14px; letter-spacing: .15px; }
.bm { display: flex; align-items: center; gap: 6px; white-space: nowrap; width: 154px; flex: none; }
.bm.trunc { letter-spacing: .38px; }
.bm:nth-child(1) { width: 77px; }
.bm:nth-child(2) { width: 97px; }
.bm:nth-child(4) { width: 153px; }
.bm:nth-child(5) { width: 84px; }
.bm:nth-child(7) { width: 125px; }
.bm:nth-child(9) { width: 70px; letter-spacing: 0; }
.bm:nth-child(10) { width: 75px; }
.bm:nth-child(13) { width: 96px; }
.bm:nth-child(14) { width: 176px; }
.more { width: 16px; margin-right: 15px; }
.bm.other { width: 145px; padding-left: 14px; border-left: 1px solid #666; letter-spacing: .28px; }

/* browser viewport */
.frame { flex: none; height: 893px; margin: 0 4px; display: flex; border-radius: 8px; overflow: hidden; background: #424242; }
.page {
  width: 1897px; height: 893px; overflow: hidden; background: #fff; color: #000;
  font-family: "Liberation Sans", Arial, sans-serif; text-align: center;
}
.page h1, .page h2, .page h3, .page p { margin: 0; }
.head { height: 165px; padding: 23px 20px 0; display: flex; gap: 20px; }
.avatar {
  width: 100px; height: 100px; border: 3px solid #fff; border-radius: 50%;
  background: #ccc; box-shadow: 0 4px 8px rgba(0, 0, 0, .5);
  color: #999; font-size: 9.3px; line-height: 97px; flex: none;
}
.who { flex: 1; padding-top: 2px; }
.who h1 { font-size: 28.8px; line-height: 32px; color: #120c26; padding-bottom: 4px; }
.who p { font-size: 16px; line-height: 20px; padding-top: 9px; }
.card { margin: 0 auto; border-radius: 8px; background: #fff; box-shadow: 0 2px 4px rgba(0, 0, 0, .1); }
.card h2 { font-size: 32px; line-height: 36px; color: #333; }
.card h3 { font-size: 24px; line-height: 28px; }
.card p { line-height: 20px; font-weight: bold; }
.error { font-size: 18px; color: #f00; }
.overview { width: 1817px; height: 136px; padding-top: 22px; }
.overview .error { padding-top: 39px; }
.actions { display: flex; flex-direction: column; align-items: center; gap: 5px; padding: 40px 0 45px; }
.btn { width: 200px; height: 35px; border-radius: 5px; background: #ffd700; color: #551a8b; text-decoration: underline; font: bold 13.333px/35px "Liberation Sans", Arial, sans-serif; }
.btn span { color: #120c16; }
.perf { width: 600px; height: 105px; padding-top: 19px; }
.warn { padding-top: 21px; font-size: 16px; color: #ffd700; }
.events { width: 800px; height: 125px; margin-top: 20px; padding-top: 21px; }
.card.events h2 { color: #ffd700; }
.events .error { padding-top: 29px; }
.profile { width: 600px; height: 400px; margin-top: 20px; padding: 21px 15px 0; }
.profile label { display: block; margin-top: 29px; font-size: 17.6px; font-weight: bold; line-height: 20px; color: #555; }
.profile input {
  display: block; width: 570px; height: 40px; margin-top: 24px; padding: 9px 10px;
  border: 1px solid #ccc; border-radius: 4px; background: #fafafa;
  font: 16px/20px "Liberation Sans", Arial, sans-serif;
}
.profile input::placeholder { color: #757575; }

.scroll { width: 15px; display: flex; flex-direction: column; align-items: center; }
.up, .down { border: 4px solid transparent; }
.up { margin-top: 1px; border-bottom-color: #888; }
.down { margin: auto 0 3px; border-top-color: #fff; }
.thumb { width: 11px; height: 572px; margin-top: 6px; background: #686868; }

/* desktop and dock */
.desktop {
  flex: none; height: 45px; border-top: 1px solid #000; margin-top: 4px;
  display: grid; justify-items: start; align-items: start;
  background:
    radial-gradient(60px 30px at 45px 10px, #25145e, transparent),
    radial-gradient(90px 40px at 20px 40px, #1e114f, transparent),
    radial-gradient(110px 40px at 310px 35px, #1f1450, transparent),
    radial-gradient(60px 30px at 385px 5px, #1a123f, transparent),
    radial-gradient(140px 30px at 1100px 40px, #35188a, transparent),
    radial-gradient(200px 50px at 1260px 30px, #1d0e40, transparent),
    linear-gradient(90deg, #0e0a26 0, #0e0a20 500px, #0c0917 700px, #120a29 1400px, #090714 1600px, #080611);
}
.stars { grid-area: 1 / 1; width: 1920px; height: 40px; }
.dock {
  grid-area: 1 / 1; width: 515px; height: 36px; margin-left: 702px; padding: 0 0 1px 1px;
  border: 1px solid #505050; border-radius: 8px; background: rgba(20, 20, 22, .88);
  display: flex; align-items: center; z-index: 1;
}
.dock i { position: relative; width: 34px; height: 34px; display: grid; place-items: center; flex: none; }
.dock svg { width: 18px; height: 18px; }
.dock b { width: 1px; height: 18px; margin: 0 1px; background: #555; }
.dock .on { width: 30px; height: 30px; margin: 0 2px; border-radius: 50%; background: #3c3c40; }
.run::after, .run3::after {
  content: ""; position: absolute; left: 50%; bottom: 2px; width: 3px; height: 3px;
  margin-left: -1.5px; border-radius: 50%; background: #1a7fe0;
}
.run.on::after { bottom: 0; }
.run3::after { box-shadow: -4px 0 #1a7fe0, 4px 0 #1a7fe0; }
.help { font: 12px "Noto Sans", sans-serif; fill: #fff; text-anchor: middle; }
```
